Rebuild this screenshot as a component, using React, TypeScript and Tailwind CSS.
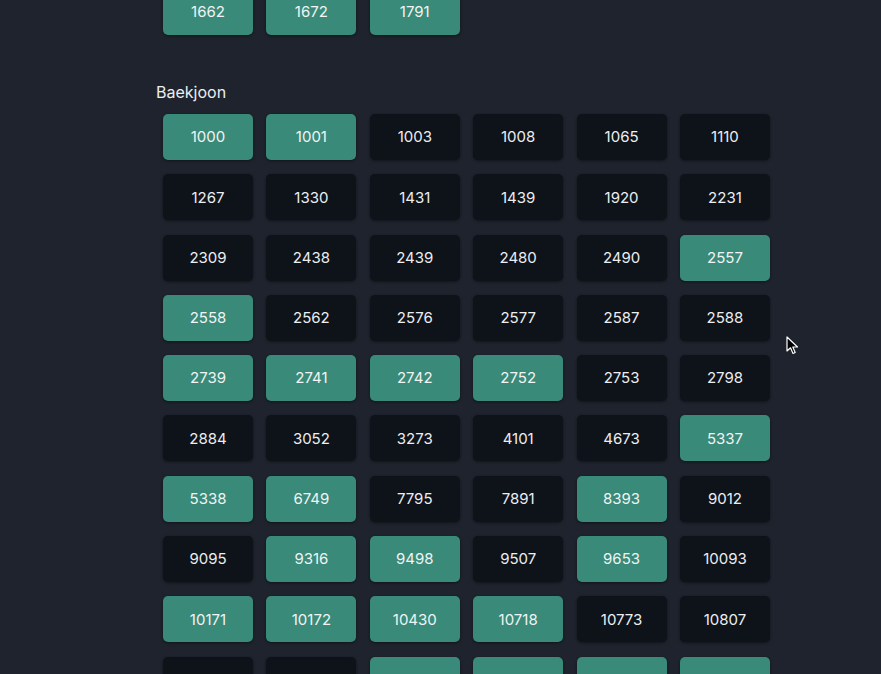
type Problem = { id: string; solved: boolean; hidden?: boolean };

const g = (id: string): Problem => ({ id, solved: true });
const d = (id: string): Problem => ({ id, solved: false });

const previous: Problem[] = [g('1662'), g('1672'), g('1791')];

const baekjoon: Problem[] = [
  g('1000'), g('1001'), d('1003'), d('1008'), d('1065'), d('1110'),
  d('1267'), d('1330'), d('1431'), d('1439'), d('1920'), d('2231'),
  d('2309'), d('2438'), d('2439'), d('2480'), d('2490'), g('2557'),
  g('2558'), d('2562'), d('2576'), d('2577'), d('2587'), d('2588'),
  g('2739'), g('2741'), g('2742'), g('2752'), d('2753'), d('2798'),
  d('2884'), d('3052'), d('3273'), d('4101'), d('4673'), g('5337'),
  g('5338'), g('6749'), d('7795'), d('7891'), g('8393'), d('9012'),
  d('9095'), g('9316'), g('9498'), d('9507'), g('9653'), d('10093'),
  g('10171'), g('10172'), g('10430'), g('10718'), d('10773'), d('10807'),
  // next row is cut off by the bottom of the window
  { id: 'r10-1', solved: false, hidden: true },
  { id: 'r10-2', solved: false, hidden: true },
  { id: 'r10-3', solved: true, hidden: true },
  { id: 'r10-4', solved: true, hidden: true },
  { id: 'r10-5', solved: true, hidden: true },
  { id: 'r10-6', solved: true, hidden: true },
];

const ProblemButton = ({ problem }: { problem: Problem }) => {
  return (
    <button
      className={
        problem.solved
          ? 'h-[46px] rounded-[5px] bg-[#398a79] pt-px text-[15px] text-[#f1f4f3] shadow-[0_1px_3px_rgba(0,0,0,0.45)]'
          : 'h-[46px] rounded-[5px] bg-[#0e1219] pt-px text-[15px] text-[#eceef1] shadow-[0_1px_3px_rgba(0,0,0,0.45)]'
      }
    >
      {problem.hidden ? '' : problem.id}
    </button>
  );
};

const ProblemGrid = ({ problems }: { problems: Problem[] }) => {
  return (
    <div className="ml-[7px] grid grid-cols-[repeat(6,90px)] gap-x-[13.4px] gap-y-[14.3px]">
      {problems.map((p) => (
        <ProblemButton key={p.id} problem={p} />
      ))}
    </div>
  );
};

const Cursor = () => (
  <svg
    className="absolute left-[786px] top-[336px]"
    width="14"
    height="20"
    viewBox="0 0 14 20"
  >
    <path
      d="M1 1 L1 15 L4.5 11.8 L7 17.5 L9.2 16.5 L6.8 11 L11.5 11 Z"
      fill="#000"
      stroke="#fff"
      strokeWidth="1.2"
      strokeLinejoin="round"
    />
  </svg>
);

export default function App() {
  return (
    <div
      className="relative h-[674px] w-full overflow-hidden bg-[#1e232d] pl-[156px]"
      style={{ fontFamily: 'Inter, "Noto Sans", sans-serif' }}
    >
      <div className="-mt-[11px]">
        <ProblemGrid problems={previous} />
      </div>
      <h2 className="mt-[45px] h-[24px] text-[16px] leading-[24px] text-[#eceef0]">
        Baekjoon
      </h2>
      <div className="mt-[10px]">
        <ProblemGrid problems={baekjoon} />
      </div>
      <Cursor />
    </div>
  );
}
